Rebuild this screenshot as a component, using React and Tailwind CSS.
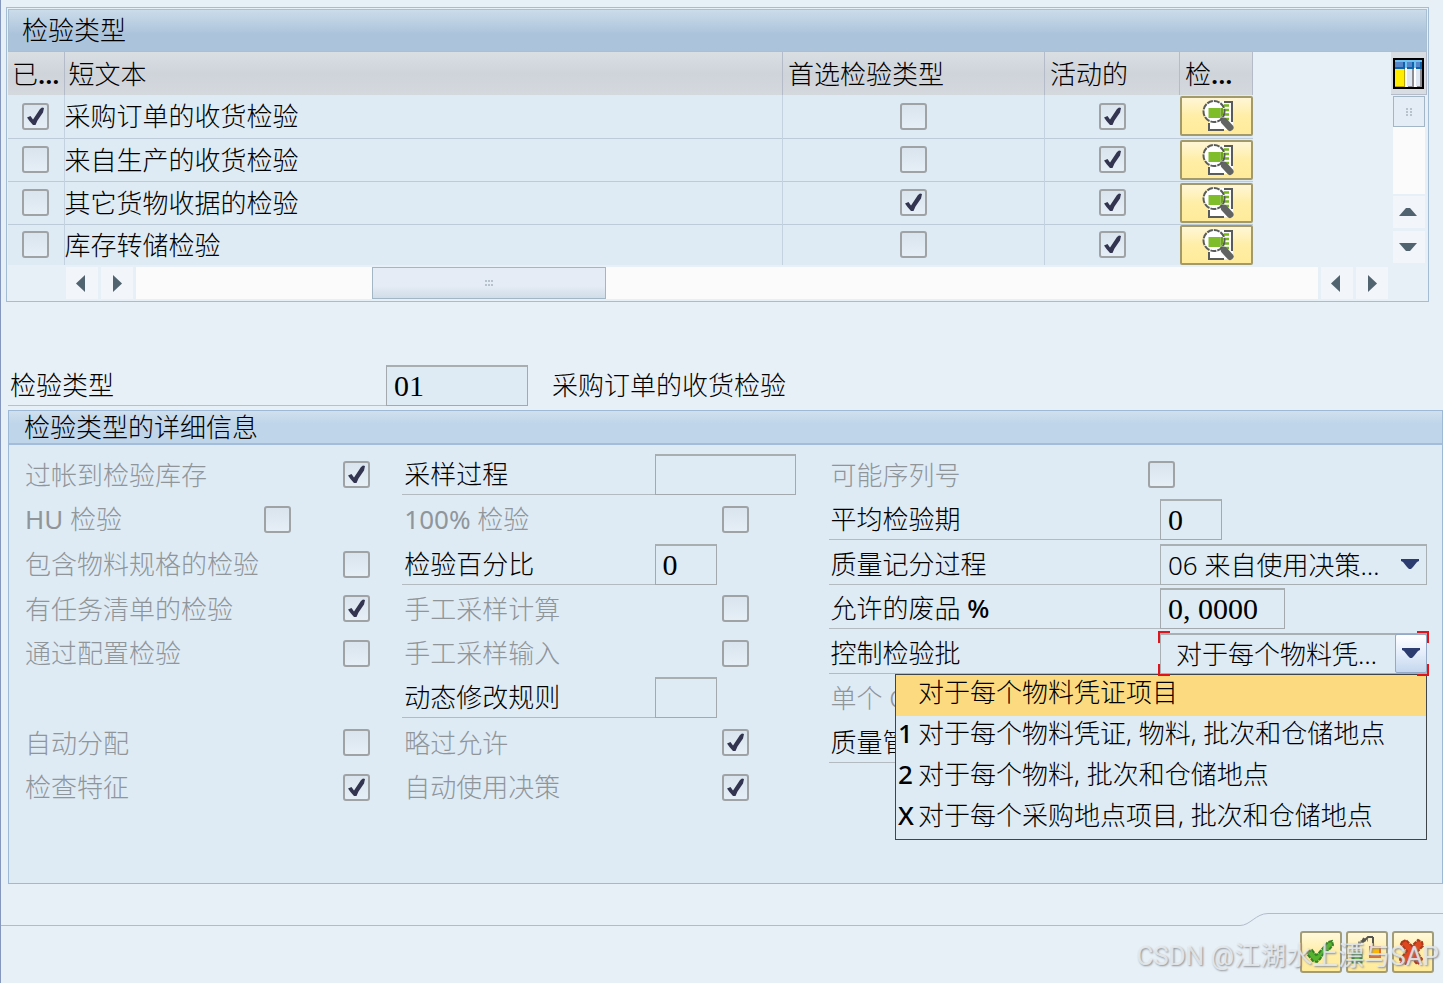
import { useId } from "react";

const inspectionTypes = [
  { name: "采购订单的收货检验", assigned: true, preferred: false, active: true },
  { name: "来自生产的收货检验", assigned: false, preferred: false, active: true },
  { name: "其它货物收据的检验", assigned: false, preferred: true, active: true },
  { name: "库存转储检验", assigned: false, preferred: false, active: true },
];

const lotOptions = [
  { code: "", text: "对于每个物料凭证项目" },
  { code: "1", text: "对于每个物料凭证, 物料, 批次和仓储地点" },
  { code: "2", text: "对于每个物料, 批次和仓储地点" },
  { code: "X", text: "对于每个采购地点项目, 批次和仓储地点" },
];

function CheckBox({ id, label, checked }) {
  return (
    <span className="relative inline-flex size-[27px] shrink-0">
      <input
        type="checkbox"
        id={id}
        aria-label={label}
        defaultChecked={checked}
        className="peer size-[27px] appearance-none rounded-[3px] border-2 border-[#9fa3a5] bg-linear-to-b from-[#d9e4ee] to-[#e6eff6]"
      />
      <svg
        viewBox="0 0 27 27"
        className="pointer-events-none absolute inset-0 hidden size-[27px] peer-checked:block"
        aria-hidden="true"
      >
        <path d="M5 14.500l3.500-1.500 2.500 3.500L18 6l2-1.500 2 .5-1 4.500-5.500 8-2 4.500h-2.500l-3.500-4z" fill="#33344f" />
      </svg>
    </span>
  );
}

function Arrow({ dir }) {
  const paths = {
    left: "M14 3v17L5 11.500z",
    right: "M7 3v17l9-8.500z",
    up: "M1 15h18l-7-8h-4z",
    down: "M1 7h18l-7 8h-4z",
  };
  return (
    <svg viewBox="0 0 22 22" className="size-[22px]" aria-hidden="true">
      <path d={paths[dir]} fill="#50636f" />
    </svg>
  );
}

function ScrollButton({ dir, label }) {
  return (
    <button
      type="button"
      aria-label={label}
      className="flex h-[32px] w-[32px] shrink-0 items-center justify-center bg-[#f2f5fa]"
    >
      <Arrow dir={dir} />
    </button>
  );
}

function DetailIcon() {
  return (
    <svg viewBox="-1 0 34 34" className="size-[34px]" aria-hidden="true">
      <path d="M7 2h24v29H7z" fill="#fff" />
      <path d="M22 3h8v20M7 24v7h15" fill="none" stroke="#5a5c5c" strokeWidth="2" />
      <path d="M22 6.500h5M22 11h5M22 15.500h5M22 20h5" stroke="#76b51b" strokeWidth="2.500" />
      <circle cx="12" cy="12.500" r="10.500" fill="#fff" stroke="#5a5c5c" strokeWidth="2" strokeDasharray="6 1" />
      <path d="M6.500 9h12v10h-12z" fill="#80bd2a" />
      <path d="M18.500 9h2.500v7l-2.500 3z" fill="#6ca51c" />
      <path d="M19 19l3 3" stroke="#5a5c5c" strokeWidth="3" />
      <path d="M22.500 22.500l5.500 6" stroke="#626464" strokeWidth="7" strokeLinecap="round" />
    </svg>
  );
}

function ColumnsIcon() {
  return (
    <svg viewBox="0 0 31 31" className="size-[31px]" aria-hidden="true">
      <path d="M0 0h31v31H0z" fill="#000" />
      <path d="M2 2h27v27H2z" fill="#f4f6fa" />
      <path d="M2 2h27v2H2z" fill="#70c0f0" />
      <path d="M2 4h27v7H2z" fill="#0d62a8" />
      <path d="M2 4h8v5H2zM14 4h5v5h-5zM23 4h4v5h-4z" fill="#5686ca" />
      <path d="M12 2h2v27h-2zM21 2h2v27h-2z" fill="#fff" />
      <path d="M12 2h2v8h-2zM21 2h2v8h-2z" fill="#70c0f0" />
      <path d="M2 11h10v18H2z" fill="#ffec00" />
      <path d="M11 11h1v18H2v-1h9z" fill="#b8a300" />
      <path d="M14 11h5v17h-5zM23 11h4v17h-4z" fill="#dfe8f2" />
      <path d="M19 11h2v18h-6v-1h4zM27 11h2v18h-5v-1h3z" fill="#8d8d92" />
    </svg>
  );
}

function ConfirmIcon() {
  return (
    <svg viewBox="0 0 36 36" className="size-[36px]" aria-hidden="true">
      <path d="M4 18l5-2 4 5 2-1L25 8l4-1 1 4-5 6-4 2-4 6-3 3-4-1-5-6z" fill="#56b32c" stroke="#37802a" strokeWidth="2" strokeDasharray="4 1" />
    </svg>
  );
}

function TransferIcon() {
  return (
    <svg viewBox="0 0 36 36" className="size-[36px]" aria-hidden="true">
      <path d="M4 12h5V9h4V6h6" fill="none" stroke="#8b8b82" strokeWidth="3" strokeDasharray="3 1" />
      <path d="M13 8l2-4M24 3v9M14 8l5-5h5" fill="none" stroke="#55564f" strokeWidth="2" />
      <path d="M4 19h8v9H4z" fill="#5cb83a" stroke="#2f7a35" strokeWidth="3" />
      <path d="M21 13h10v10H21z" fill="#ffb800" stroke="#e36a2c" strokeWidth="2" />
    </svg>
  );
}

function CancelIcon() {
  return (
    <svg viewBox="0 0 36 36" className="size-[36px]" aria-hidden="true">
      <path d="M7 8l4-2 6 6 6-6 4 2 1 4-6 6 5 7-2 4-3 1-6-7-5 7-5-1-1-4 7-8-6-7z" fill="#e0491f" stroke="#a83a1c" strokeWidth="2" strokeDasharray="4 1" />
    </svg>
  );
}

function FooterButton({ label, children }) {
  return (
    <button
      type="button"
      aria-label={label}
      className="flex size-[42px] items-center justify-center rounded-[3px] border-2 border-[#a39c78] bg-linear-to-b from-[#fff8dc] via-[#ffeea8] to-[#ffeb9a]"
    >
      {children}
    </button>
  );
}

function CheckRow({ label, checked, areaClass, className = "" }) {
  const id = useId();
  return (
    <div className={"flex items-center " + className}>
      <label htmlFor={id} className="flex-1 whitespace-nowrap text-[#90959a]">
        {label}
      </label>
      <div className={"flex shrink-0 " + areaClass}>
        <CheckBox id={id} checked={checked} />
      </div>
    </div>
  );
}

function FieldRow({ label, areaClass, children, id }) {
  return (
    <div className="flex items-center">
      <label
        htmlFor={id}
        className="flex h-[41px] flex-1 items-center border-b border-[#b3bbc0] whitespace-pre"
      >
        {label}
      </label>
      <div className={"flex shrink-0 " + areaClass}>{children}</div>
    </div>
  );
}

function TextField({ id, value = "", widthClass }) {
  return (
    <input
      id={id}
      type="text"
      defaultValue={value}
      className={
        "h-[41px] border border-t-2 border-t-[#a9aeb1] border-r-[#a3a9ad] border-b-[#a3a9ad] border-l-[#a3a9ad] bg-[#deebf5] px-[7px] font-['Liberation_Serif','Noto_Sans_CJK_SC',serif] text-[30px] leading-[36px] " +
        widthClass
      }
    />
  );
}

function SelectArrow() {
  return (
    <svg viewBox="0 0 20 14" className="h-[14px] w-[20px]" aria-hidden="true">
      <path d="M1 2h18v2l-2 1-4 5-2 2H9l-2-2-4-5-2-1z" fill="#2d3c70" />
    </svg>
  );
}

export default function App() {
  return (
    <div className="flex min-h-screen flex-col overflow-x-hidden border-l border-[#8597bd] bg-[#e8f0f7] font-['Noto_Sans','Noto_Sans_CJK_SC',sans-serif] text-[26px] leading-[34px] font-light text-black">
      <section className="mt-[7px] mr-[14px] ml-[5px] border border-[#a4bcd4] p-px">
        <h1 className="flex h-[43px] items-center border border-[#a9bfd2] bg-linear-to-b from-[#cbdcea] to-[#abc3db] to-60% pb-[2px] pl-[13px] text-[26px] font-light">
          检验类型
        </h1>
        <div className="flex">
          <table className="flex-1 table-fixed border-collapse">
            <colgroup>
              <col className="w-[56px]" />
              <col />
              <col className="w-[262px]" />
              <col className="w-[135px]" />
              <col className="w-[73px]" />
            </colgroup>
            <thead>
              <tr className="h-[43px] bg-linear-to-b from-[#dadfe4] via-[#cfd3da] to-[#d4d9de] text-left">
                <th className="border-r border-[#b3bcc8] pl-[4px] font-light whitespace-nowrap">
                  已<span className="font-semibold">...</span>
                </th>
                <th className="pl-[4px] font-light">短文本</th>
                <th className="border-l border-[#b3bcc8] pl-[5px] font-light">首选检验类型</th>
                <th className="border-l border-[#b3bcc8] pl-[5px] font-light">活动的</th>
                <th className="border-x border-[#b3bcc8] pl-[5px] font-light whitespace-nowrap">
                  检<span className="font-semibold">...</span>
                </th>
              </tr>
            </thead>
            <tbody>
              {inspectionTypes.map((row) => (
                <tr key={row.name} className="h-[43px] border-b border-[#bccbd7] bg-[#deebf5] last:h-[40px] last:border-b-0">
                  <td className="border-r border-[#c3d2de] p-0">
                    <div className="flex justify-center">
                      <CheckBox label={"已分配 " + row.name} checked={row.assigned} />
                    </div>
                  </td>
                  <td className="p-0">{row.name}</td>
                  <td className="border-l border-[#c3d2de] p-0">
                    <div className="flex justify-center">
                      <CheckBox label={"首选 " + row.name} checked={row.preferred} />
                    </div>
                  </td>
                  <td className="border-l border-[#c3d2de] p-0">
                    <div className="flex justify-center">
                      <CheckBox label={"活动 " + row.name} checked={row.active} />
                    </div>
                  </td>
                  <td className="p-0">
                    <button
                      type="button"
                      aria-label={"明细 " + row.name}
                      className="flex h-[40px] w-full items-center justify-center rounded-[2px] border-2 border-[#a39a6c] bg-linear-to-b from-[#fff6d6] via-[#ffeea6] to-[#ffeb9a] pl-[4px]"
                    >
                      <DetailIcon />
                    </button>
                  </td>
                </tr>
              ))}
            </tbody>
          </table>
          <div className="ml-[138px] flex w-[36px] shrink-0 flex-col items-center">
            <button
              type="button"
              aria-label="表设置"
              className="flex h-[43px] w-[36px] items-center justify-center border-r border-b border-[#b3bcc8] bg-[#d8dce3]"
            >
              <ColumnsIcon />
            </button>
            <div className="mt-px mb-[2px] w-[32px] flex-1 bg-[#fbfbfc]">
              <div className="flex h-[31px] items-center justify-center border border-[#a3b6c6] bg-[#e4ecf5]">
                <svg viewBox="0 0 6 8" className="h-[8px] w-[6px]" aria-hidden="true">
                  <path d="M0 0h2v2H0zM4 0h2v2H4zM0 3h2v2H0zM4 3h2v2H4zM0 6h2v2H0zM4 6h2v2H4z" fill="#b7c3cc" />
                </svg>
              </div>
            </div>
            <ScrollButton dir="up" label="向上滚动" />
            <div className="mt-[3px] mb-[2px]">
              <ScrollButton dir="down" label="向下滚动" />
            </div>
          </div>
        </div>
        <div className="mt-[2px] mb-px flex gap-[3px] pr-[39px] pl-[58px]">
          <ScrollButton dir="left" label="滚动到开头" />
          <ScrollButton dir="right" label="向右滚动" />
          <div className="flex flex-1 bg-[#fbfbfb]">
            <div className="w-[20%]" />
            <div className="flex w-[234px] items-center justify-center border border-[#a3b6c6] bg-linear-to-b from-[#e5ecf5] from-60% to-[#d0dde8]">
              <svg viewBox="0 0 8 6" className="h-[6px] w-[8px]" aria-hidden="true">
                <path d="M0 0h2v2H0zM3 0h2v2H3zM6 0h2v2H6zM0 4h2v2H0zM3 4h2v2H3zM6 4h2v2H6z" fill="#b7c3cc" />
              </svg>
            </div>
          </div>
          <ScrollButton dir="left" label="向左滚动" />
          <ScrollButton dir="right" label="滚动到末尾" />
        </div>
      </section>

      <div className="mt-[63px] ml-[7px] flex items-center">
        <label htmlFor="type-code" className="flex h-[41px] w-[378px] items-center border-b border-[#b9c1c7] pl-[2px]">
          检验类型
        </label>
        <TextField id="type-code" value="01" widthClass="w-[142px]" />
        <span className="ml-[24px]">采购订单的收货检验</span>
      </div>

      <section className="mt-[4px] ml-[7px] border border-[#9db9d6] bg-[#deebf5] pb-[73px]">
        <h2 className="flex h-[34px] items-center border-b-2 border-[#a3bcd9] bg-linear-to-b from-[#d0e0ee] to-[#bfd5ea] to-40% pl-[15px] text-[26px] font-light">
          检验类型的详细信息
        </h2>
        <div className="mt-[8px] mr-[15px] grid h-[357px] grid-cols-[393fr_426fr_598fr]">
          <div className="grid grid-rows-8 pl-[16px]">
            <CheckRow label="过帐到检验库存" checked areaClass="w-[59px]" />
            <CheckRow
              label={<><span className="font-normal">HU</span> 检验</>}
              areaClass="w-[138px]"
            />
            <CheckRow label="包含物料规格的检验" areaClass="w-[59px]" />
            <CheckRow label="有任务清单的检验" checked areaClass="w-[59px]" />
            <CheckRow label="通过配置检验" areaClass="w-[59px]" />
            <CheckRow label="自动分配" areaClass="w-[59px]" className="row-start-7" />
            <CheckRow label="检查特征" checked areaClass="w-[59px]" className="row-start-8" />
          </div>
          <div className="grid grid-rows-8 *:[&>label]:pl-[2px]">
            <FieldRow label="采样过程" id="sampling" areaClass="w-[174px]">
              <TextField id="sampling" widthClass="w-[141px]" />
            </FieldRow>
            <CheckRow
              label={<><span className="font-normal">100%</span> 检验</>}
              areaClass="w-[107px]"
            />
            <FieldRow label="检验百分比" id="percent" areaClass="w-[174px]">
              <TextField id="percent" value="0" widthClass="w-[62px]" />
            </FieldRow>
            <CheckRow label="手工采样计算" areaClass="w-[107px]" />
            <CheckRow label="手工采样输入" areaClass="w-[107px]" />
            <FieldRow label="动态修改规则" id="rule" areaClass="w-[174px]">
              <TextField id="rule" widthClass="w-[62px]" />
            </FieldRow>
            <CheckRow label="略过允许" checked areaClass="w-[107px]" />
            <CheckRow label="自动使用决策" checked areaClass="w-[107px]" />
          </div>
          <div className="grid grid-rows-8 *:[&>label]:pl-[2px]">
            <CheckRow label="可能序列号" areaClass="w-[279px]" />
            <FieldRow label="平均检验期" id="duration" areaClass="w-[267px]">
              <TextField id="duration" value="0" widthClass="w-[62px]" />
            </FieldRow>
            <FieldRow label="质量记分过程" id="score" areaClass="w-[267px]">
              <div className="relative w-full">
                <select
                  id="score"
                  className="h-[41px] w-full appearance-none border border-t-2 border-[#a9b0b4] bg-[#deebf5] pr-[32px] pl-[7px]"
                >
                  <option>06 来自使用决策…</option>
                </select>
                <span className="pointer-events-none absolute inset-y-0 right-[7px] flex items-center">
                  <SelectArrow />
                </span>
              </div>
            </FieldRow>
            <FieldRow
              label={<>允许的废品 <span className="font-medium">%</span></>}
              id="scrap"
              areaClass="w-[267px]"
            >
              <TextField id="scrap" value="0, 0000" widthClass="w-[125px]" />
            </FieldRow>
            <FieldRow label="控制检验批" id="lot" areaClass="w-[267px]">
              <div className="relative w-full">
                <select
                  id="lot"
                  className="h-[41px] w-full appearance-none border border-t-2 border-[#a9b0b4] bg-[#deebf5] pr-[32px] pl-[15px]"
                >
                  <option>对于每个物料凭…</option>
                </select>
                <span className="pointer-events-none absolute inset-y-px right-0 flex w-[32px] items-center justify-center rounded-[2px] border border-[#93a9c6] bg-linear-to-b from-white via-[#e4edfa] to-[#c4d7ee]">
                  <SelectArrow />
                </span>
                <span className="pointer-events-none absolute -top-[2px] -left-[2px] z-20 size-[12px] border-t-2 border-l-2 border-[#e0141c]" />
                <span className="pointer-events-none absolute -top-[2px] -right-[2px] z-20 size-[12px] border-t-2 border-r-2 border-[#e0141c]" />
                <span className="pointer-events-none absolute -bottom-[2px] -left-[2px] z-20 size-[12px] border-b-2 border-l-2 border-[#e0141c]" />
                <span className="pointer-events-none absolute -right-[2px] -bottom-[2px] z-20 size-[12px] border-r-2 border-b-2 border-[#e0141c]" />
                <ul
                  role="listbox"
                  aria-label="控制检验批"
                  className="absolute top-full right-0 z-10 w-[532px] border border-[#40454a] bg-[#deebf5]"
                >
                  {lotOptions.map((option, index) => (
                    <li
                      key={option.text}
                      role="option"
                      aria-selected={index === 0}
                      className="flex h-[41px] items-start pl-[2px] whitespace-nowrap aria-selected:bg-[#fcdb80]"
                    >
                      <span className="w-[20px] shrink-0 font-medium">{option.code}</span>
                      {option.text}
                    </li>
                  ))}
                </ul>
              </div>
            </FieldRow>
            <CheckRow label="单个 Q" areaClass="w-[279px]" />
            <FieldRow label="质量管" id="order" areaClass="w-[267px]">
              <TextField id="order" widthClass="w-[220px]" />
            </FieldRow>
          </div>
        </div>
      </section>

      <footer className="relative mt-[29px] flex flex-1 flex-col">
        <div className="flex h-[13px]">
          <div className="flex-1 border-b border-[#b1bccb]" />
          <svg viewBox="0 0 28 13" className="h-[13px] w-[28px]" aria-hidden="true">
            <path d="M0 12.500C10 12.500 16 .5 28 .5" fill="none" stroke="#b1bccb" />
          </svg>
          <div className="w-[175px] border-t border-[#b1bccb]" />
        </div>
        <div className="mt-[5px] flex justify-end gap-[4px] pr-[9px] pb-[10px]">
          <FooterButton label="确认">
            <ConfirmIcon />
          </FooterButton>
          <FooterButton label="传输">
            <TransferIcon />
          </FooterButton>
          <FooterButton label="取消">
            <CancelIcon />
          </FooterButton>
        </div>
        <p className="pointer-events-none absolute right-[4px] bottom-[10px] font-[Roboto,'Noto_Sans_CJK_SC',sans-serif] text-[26px] font-normal whitespace-nowrap text-[#e9edf0]/85 [text-shadow:1px_1px_2px_#8a8f94]">
          CSDN @江湖水上漂与SAP
        </p>
      </footer>
    </div>
  );
}
